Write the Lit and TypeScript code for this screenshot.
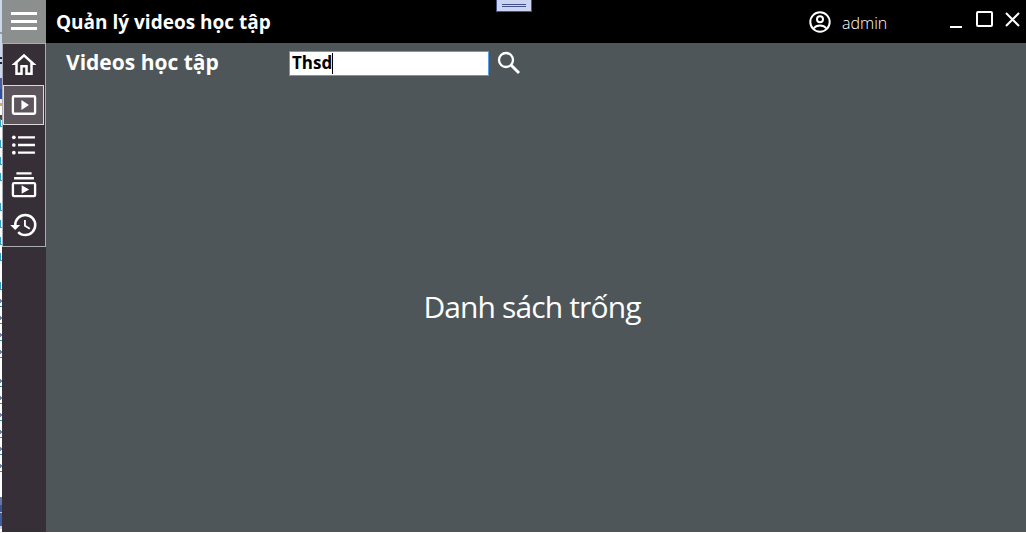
import { LitElement, html, css, svg } from "lit";
import { customElement } from "lit/decorators.js";

const NAV = [
  { id: "home", shape: svg`<path d="M12 5.690l5 4.500V18h-2v-6H9v6H7v-7.810l5-4.500M12 3L2 12h3v8h6v-6h2v6h6v-8h3L12 3z"/>` },
  { id: "videos", shape: svg`<path fill-rule="evenodd" d="M3.500 3.500h17a2 2 0 0 1 2 2v13a2 2 0 0 1-2 2h-17a2 2 0 0 1-2-2v-13a2 2 0 0 1 2-2zm0 2v13h17v-13zM9.800 7.800v8.400l6.400-4.200z"/>` },
  { id: "list", shape: svg`<path d="M6.900 4.400h14.500v2H6.900zM6.900 11h14.500v2H6.900zM6.900 17.600h14.500v2H6.900z"/><circle cx="3.300" cy="5.400" r="1.600"/><circle cx="3.300" cy="12" r="1.600"/><circle cx="3.300" cy="18.600" r="1.600"/>` },
  { id: "playlist", shape: svg`<path fill-rule="evenodd" d="M5.500 1h13v2h-13zM3.500 5.200h17v2h-17zM3.500 9.400h17a2 2 0 0 1 2 2v9.200a2 2 0 0 1-2 2h-17a2 2 0 0 1-2-2v-9.200a2 2 0 0 1 2-2zm0 2v9.200h17v-9.200zm6.500.9v7.200l6.400-3.600z"/>` },
  { id: "history", shape: svg`<path d="M13.500 8H12v5l4.280 2.540.72-1.210-3.500-2.080V8M13 3a9 9 0 0 0-9 9H1l3.960 4.030L9 12H6a7 7 0 1 1 7 7c-1.930 0-3.680-.790-4.940-2.060l-1.420 1.420A8.896 8.896 0 0 0 13 21a9 9 0 1 0 0-18"/>` },
];

// Sliver of the editor window that shows past the left edge: [y, height, colour]
const BACKDROP: [number, number, string][] = [
  [0, 32, "#cbd6f0"], [32, 2, "#8e99a8"], [34, 23, "#cbd6f0"], [57, 2, "#1b2433"], [59, 3, "#cbd6f0"], [62, 2, "#1b2433"],
  [64, 14, "#cbd6f0"], [78, 11, "#4a5f9e"], [89, 10, "#2b4fa5"], [99, 4, "#e8eefb"], [103, 3, "#e0a74b"], [115, 5, "#4b4436"],
  [497, 8, "#6474ac"], [505, 7, "#3b5396"], [512, 1, "#b9c8e4"], [513, 13, "#3f5da5"], [526, 3, "#c9d3e8"],
];
const LINKS = [126, 147, 164, 180, 210, 227, 244, 260, 289];
const TWOS = [306, 323, 340, 357, 386, 403, 420, 437, 454, 471];

@customElement("app-root")
export class AppRoot extends LitElement {
  static styles = css`
    :host { display: block; width: 1026px; height: 533px; overflow: hidden; background: #fff;
      font-family: "Open Sans", "Noto Sans", sans-serif; color: #fff; position: relative; }
    .window { display: grid; grid-template-columns: 2px 44px 1fr; height: 532px; }
    .rail { background: #372f37; }
    .menu { height: 43px; box-sizing: border-box; background: #8b908f; display: flex; flex-direction: column;
      justify-content: center; align-items: center; gap: 4.500px; padding-bottom: 1px; }
    .menu i { width: 26px; height: 3px; background: #fff; }
    .nav { height: 204px; box-sizing: border-box; border: 1px solid #abadb3; display: flex; flex-direction: column; padding-top: 1px; }
    .item { box-sizing: border-box; width: 41px; height: 40px; display: flex; align-items: center;
      justify-content: center; border: 1px solid transparent; padding-left: 1px; }
    .item.active { background: #5c555b; border-color: #dadada; }
    .item svg { width: 28px; height: 28px; fill: #fff; flex: none; }
    .item.home svg, .item.history svg { width: 30px; height: 30px; }
    .main { display: flex; flex-direction: column; background: #4e5659; }
    .bar { height: 43px; background: #000; display: flex; }
    .title { font-size: 19px; font-weight: 700; line-height: 44px; margin-left: 10px; width: 753px; white-space: nowrap; }
    .user { width: 22px; height: 22px; margin: 11px 11px 0 0; }
    .name { font-size: 16px; line-height: 46px; width: 107px; font-weight: 300; }
    .controls { width: 72px; height: 20px; margin-top: 10px; }
    .tools { height: 36px; display: flex; margin-left: 20px; }
    .heading { width: 223px; font-size: 21px; line-height: 38px; font-weight: 700; white-space: nowrap; }
    .input { box-sizing: border-box; width: 200px; height: 25px; margin-top: 8px; border: 1px solid #569de5; background: #fff;
      color: #000; font-size: 17px; font-weight: 700; line-height: 21px; padding-left: 2px; display: flex; }
    .caret { width: 1px; height: 21px; background: #000; margin-top: 1px; }
    .search { width: 24px; height: 24px; margin: 8px 0 0 8px; }
    .empty { flex: 1; text-align: center; font-size: 30px; letter-spacing: -0.870px; line-height: 40px; padding-top: 208px; padding-right: 8px; }
    .grip { position: absolute; left: 496px; top: 0; width: 36px; height: 12px; }
  `;

  render() {
    return html`
      <div class="window">
        <svg width="2" height="532" shape-rendering="crispEdges">
          ${BACKDROP.map(([y, h, c]) => svg`<rect y=${y} width="2" height=${h} fill=${c}/>`)}
          ${LINKS.map((y) => svg`<path d="M0 ${y - 7}h1v7h1v1H0z" fill="#2f9fc4"/>`)}
          ${TWOS.map((y) => svg`<path d="M0 ${y - 7}h1v1h1v2H1v1H0z" fill="#6d86a8"/><rect y=${y} width="2" height="1" fill="#2b91af"/>`)}
        </svg>
        <div class="rail">
          <div class="menu"><i></i><i></i><i></i></div>
          <div class="nav">
            ${NAV.map((n) => html`<div class="item ${n.id} ${n.id === "videos" ? "active" : ""}"><svg viewBox="0 0 24 24">${n.shape}</svg></div>`)}
          </div>
        </div>
        <div class="main">
          <div class="bar">
            <div class="title">Quản lý videos học tập</div>
            <svg class="user" viewBox="0 0 22 22" fill="none" stroke="#fff" stroke-width="2"><circle cx="11" cy="11" r="9.700"/><circle cx="11" cy="8.300" r="3"/><path d="M4.500 17.500c3-4 10-4 13 0"/></svg>
            <div class="name">admin</div>
            <svg class="controls" viewBox="0 0 72 20" fill="none" stroke="#fff" stroke-width="2"><path d="M1 17h12"/><rect x="28" y="2" width="15" height="14" rx="1"/><path d="M57 3l13 13M70 3L57 16"/></svg>
          </div>
          <div class="tools">
            <div class="heading">Videos học tập</div>
            <div class="input"><span>Thsd</span><div class="caret"></div></div>
            <svg class="search" viewBox="0 0 24 24" fill="none" stroke="#fff"><circle cx="9" cy="9" r="7" stroke-width="2.300"/><path d="M14 14l8 8" stroke-width="3"/></svg>
          </div>
          <div class="empty">Danh sách trống</div>
        </div>
      </div>
      <svg class="grip" viewBox="0 0 36 12"><path d="M0 0h36v12H0z" fill="#43528c"/><path d="M1 0h34v11H1z" fill="#ccd5f0"/><path d="M6 4h24v1H6zM6 6h24v1H6z" fill="#43528c"/></svg>
    `;
  }
}
